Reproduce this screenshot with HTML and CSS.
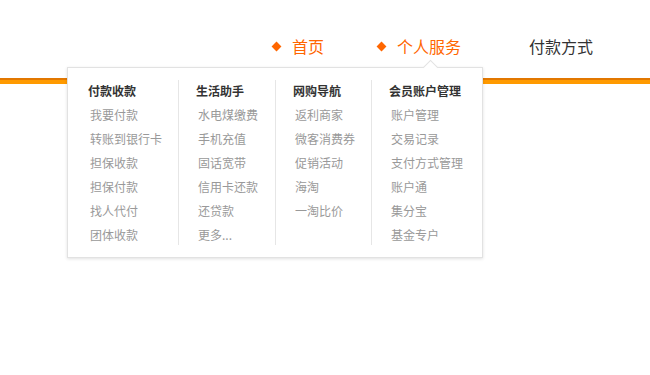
FILE: index.html
```html
<!DOCTYPE html>
<html lang="zh-CN">
<head>
    <meta charset="UTF-8">
    <meta name="viewport" content="width=device-width, initial-scale=1.0">
    <title>个人服务</title>
    <link rel="stylesheet" href="styles.css">
</head>
<body>
<header class="top">
    <nav class="nav">
        <a class="nav-item nav-home active" href="#"><span class="dot"></span>首页</a>
        <a class="nav-item nav-service active" href="#"><span class="dot"></span>个人服务</a>
        <a class="nav-item nav-pay" href="#">付款方式</a>
    </nav>
    <div class="bar"></div>

    <div class="dropdown">
        <span class="arrow"></span>
        <ul class="col col-1">
            <li class="title">付款收款</li>
            <li><a href="#">我要付款</a></li>
            <li><a href="#">转账到银行卡</a></li>
            <li><a href="#">担保收款</a></li>
            <li><a href="#">担保付款</a></li>
            <li><a href="#">找人代付</a></li>
            <li><a href="#">团体收款</a></li>
        </ul>
        <ul class="col col-2">
            <li class="title">生活助手</li>
            <li><a href="#">水电煤缴费</a></li>
            <li><a href="#">手机充值</a></li>
            <li><a href="#">固话宽带</a></li>
            <li><a href="#">信用卡还款</a></li>
            <li><a href="#">还贷款</a></li>
            <li><a href="#">更多...</a></li>
        </ul>
        <ul class="col col-3">
            <li class="title">网购导航</li>
            <li><a href="#">返利商家</a></li>
            <li><a href="#">微客消费券</a></li>
            <li><a href="#">促销活动</a></li>
            <li><a href="#">海淘</a></li>
            <li><a href="#">一淘比价</a></li>
        </ul>
        <ul class="col col-4">
            <li class="title">会员账户管理</li>
            <li><a href="#">账户管理</a></li>
            <li><a href="#">交易记录</a></li>
            <li><a href="#">支付方式管理</a></li>
            <li><a href="#">账户通</a></li>
            <li><a href="#">集分宝</a></li>
            <li><a href="#">基金专户</a></li>
        </ul>
    </div>
</header>
</body>
</html>
```

FILE: styles.css
```css
/* Page */
html, body {
    height: 100%;
}

body {
    margin: 0;
    padding: 0;
    background: #fff;
    font-family: "Noto Sans CJK SC", "Noto Sans", sans-serif;
    font-size: 12px;
}

a {
    text-decoration: none;
}

/* Header nav */
.top {
    position: relative;
    height: 375px;
}

.nav {
    height: 78px;
    display: flex;
    align-items: center;
    padding-left: 271px;
    box-sizing: border-box;
}

.nav-item {
    display: flex;
    align-items: center;
    font-size: 16px;
    color: #333;
    line-height: 20px;
    margin-top: 14px;
}

.nav-item.active {
    color: #f60;
}

.nav-home {
    margin-right: 52px;
}

.nav-service {
    margin-right: 68px;
}

.dot {
    width: 7px;
    height: 7px;
    background: #f60;
    transform: rotate(45deg);
    margin: 0 12px 0 2px;
}

/* Orange strip under the nav */
.bar {
    height: 4px;
    border-top: 2px solid #e27700;
    background: #ff9a00;
}

/* Dropdown menu */
.dropdown {
    position: absolute;
    left: 67px;
    top: 67px;
    width: 414px;
    height: 177px;
    padding-top: 12px;
    background: #fff;
    border: 1px solid #e2e2e2;
    box-shadow: 0 1px 3px rgba(0, 0, 0, 0.12);
    display: flex;
    align-items: flex-start;
    z-index: 2;
}

.arrow {
    position: absolute;
    top: -6px;
    left: 357px;
    width: 10px;
    height: 10px;
    background: #fff;
    border-top: 1px solid #e2e2e2;
    border-left: 1px solid #e2e2e2;
    transform: rotate(45deg);
}

.col {
    list-style: none;
    margin: 0;
    padding: 0 0 0 17px;
    line-height: 24px;
    border-left: 1px solid #e6e6e6;
    height: 165px;
    box-sizing: border-box;
}

.col li {
    padding-left: 2px;
    white-space: nowrap;
}

.col li.title {
    padding-left: 0;
    font-weight: bold;
    color: #333;
    margin-top: -1px;
}

.col a {
    color: #999;
}

.col-1 {
    width: 110px;
    padding-left: 20px;
    border-left: none;
}

.col-2 {
    width: 97px;
}

.col-3 {
    width: 96px;
}

.col-4 {
    flex: 1;
}
```
